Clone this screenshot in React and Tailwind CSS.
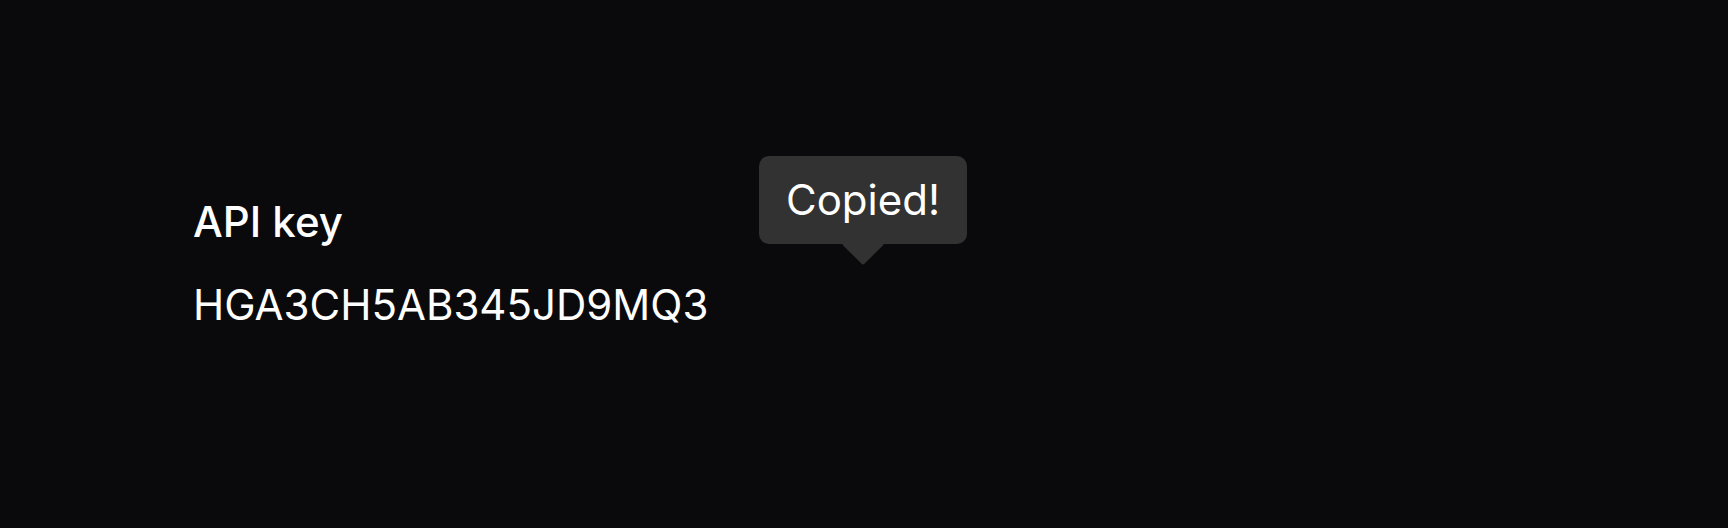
export default function App() {
  return (
    <div
      className="h-[528px] w-full bg-[#0a0a0c] flex items-center pl-[193px] pb-[2px] text-white"
      style={{ fontFamily: "Inter, 'Noto Sans', sans-serif" }}
    >
      <div className="flex flex-col gap-[33px]">
        <div className="text-[42px] leading-[50px] font-medium">API key</div>
        <div className="relative text-[42px] leading-[50px]">
          HGA3CH5AB345JD9MQ3
          {/* Tooltip */}
          <div className="absolute top-[-124px] left-[566px]">
            <div className="relative bg-[#323232] rounded-[10px] px-[27px] py-[19px] text-[42px] leading-[50px] whitespace-nowrap">
              <span className="relative z-10">Copied!</span>
              <div className="absolute left-1/2 -bottom-[15px] -ml-[15px] w-[30px] h-[30px] bg-[#323232] rotate-45 rounded-[2px]" />
            </div>
          </div>
        </div>
      </div>
    </div>
  )
}
